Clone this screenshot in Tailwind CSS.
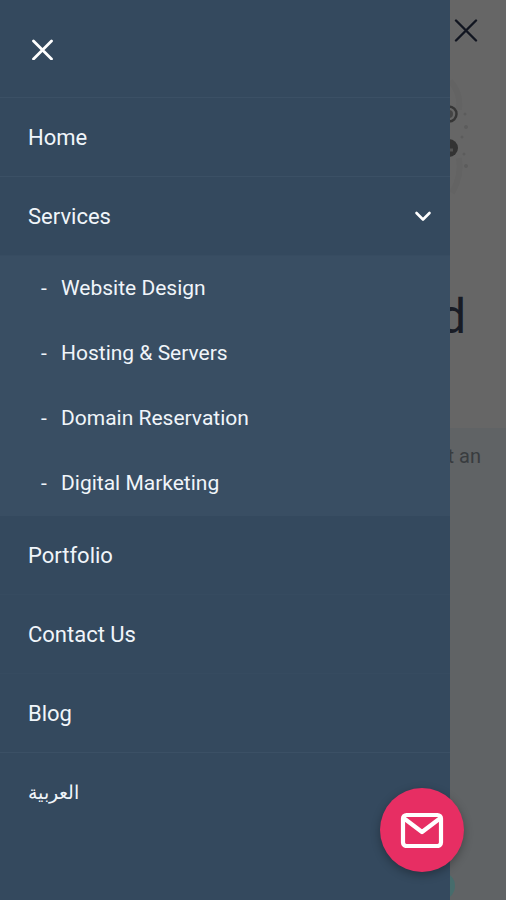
<!DOCTYPE html>
<html lang="en">
<head>
<meta charset="utf-8">
<meta name="viewport" content="width=device-width, initial-scale=1">
<title>Menu</title>
<script src="https://cdn.jsdelivr.net/npm/@tailwindcss/browser@4"></script>
</head>
<body class="relative min-h-screen overflow-x-hidden bg-white font-[Roboto,'Noto_Sans',sans-serif] text-[22px] leading-8">

<!-- Page under the drawer -->
<main class="flex min-h-screen flex-col text-right">
  <header class="flex justify-end px-7 pt-[18px]">
    <button type="button" aria-label="Close page menu" class="text-[#2b3550]">
      <svg class="size-6" viewBox="0 0 24 24" fill="none" stroke="currentColor" stroke-width="2.400" stroke-linecap="round"><path d="M2 2.500 22 22.500M22 2.500 2 22.500"/></svg>
    </button>
  </header>
  <div class="flex justify-end px-7 pt-9">
    <svg class="h-[120px] w-10" viewBox="0 0 40 120" fill="none" aria-hidden="true">
      <path d="M12 3Q23 14 21 32M21 80Q24 98 14 115" stroke="#f7f7f7" stroke-width="6"/>
      <circle cx="11" cy="36" r="7.500" stroke="#888" stroke-width="2.500"/>
      <circle cx="11" cy="36" r="4" fill="#aaa"/>
      <circle cx="11" cy="70" r="9" fill="#808080"/>
      <path d="M8 72h7" stroke="#ccc" stroke-width="3"/>
      <g fill="#e6e6e6"><circle cx="27" cy="36" r="1.500"/><circle cx="28" cy="49" r="2"/><circle cx="24" cy="59" r="1.500"/><circle cx="26" cy="76" r="1.500"/><circle cx="28" cy="88" r="2"/></g>
    </svg>
  </div>
  <h1 class="px-10 pt-[88px] pb-20 text-5xl leading-[62px] font-normal text-[#3f485c]">d</h1>
  <section class="grow bg-[#f0f8fc] px-[25px] pt-3 text-xl leading-8 text-[#8f979f]">
    <p>t an</p>
  </section>
</main>

<div class="absolute inset-0 bg-black/60"></div>
<div class="absolute bottom-0 right-[51px] size-7 rounded-full bg-[#466c6c]"></div>

<!-- Drawer -->
<aside class="absolute inset-y-0 left-0 right-14 bg-[#34495e] text-[#f0f5fa]">
  <div class="flex h-[98px] items-center border-b border-[#3b5065] px-8">
    <button type="button" aria-label="Close menu" class="text-white">
      <svg class="size-[22px]" viewBox="0 0 22 22" fill="none" stroke="currentColor" stroke-width="2.800" stroke-linecap="round"><path d="M1.500 3 19.500 21M19.500 3 1.500 21"/></svg>
    </button>
  </div>
  <nav aria-label="Main">
    <ul>
      <li class="border-b border-[#3b5065]"><a href="#" class="block px-7 pt-6 pb-[22px]">Home</a></li>
      <li>
        <button type="button" aria-expanded="true" class="flex w-full items-center justify-between border-b border-[#374c61] pt-6 pr-[18px] pb-[22px] pl-7">
          <span>Services</span>
          <svg class="size-[18px]" viewBox="0 0 18 18" fill="none" stroke="white" stroke-width="2.600" stroke-linecap="round" stroke-linejoin="round" aria-hidden="true"><path d="m2.500 5 6.500 6.500L15.500 5"/></svg>
        </button>
        <ul class="bg-[#394e63] text-[21px]">
          <li><a href="#" class="flex h-[65px] items-center gap-3 px-[41px] pb-px"><span class="w-2">-</span>Website Design</a></li>
          <li><a href="#" class="flex h-[65px] items-center gap-3 px-[41px] pb-px"><span class="w-2">-</span>Hosting &amp; Servers</a></li>
          <li><a href="#" class="flex h-[65px] items-center gap-3 px-[41px] pb-px"><span class="w-2">-</span>Domain Reservation</a></li>
          <li><a href="#" class="flex h-[65px] items-center gap-3 px-[41px] pb-px"><span class="w-2">-</span>Digital Marketing</a></li>
        </ul>
      </li>
      <li class="border-b border-[#364b60]"><a href="#" class="block px-7 pt-6 pb-[22px]">Portfolio</a></li>
      <li class="border-b border-[#364b60]"><a href="#" class="block px-7 pt-6 pb-[22px]">Contact Us</a></li>
      <li class="border-b border-[#3b5065]"><a href="#" class="block px-7 pt-6 pb-[22px]">Blog</a></li>
      <li><a href="#" lang="ar" class="block px-7 pt-6 pb-[22px] text-[19px]">العربية</a></li>
    </ul>
  </nav>
</aside>

<button type="button" aria-label="Send us a message" class="absolute right-[42px] bottom-7 flex size-[84px] items-center justify-center rounded-full bg-[#e72e63] text-white shadow-[0_3px_10px_rgba(0,0,0,0.3)]">
  <svg class="h-9 w-11" viewBox="0 0 44 36" fill="none" stroke="currentColor" stroke-width="4.200" stroke-linejoin="round"><rect x="3" y="3" width="38" height="31" rx="3.500"/><path d="m3.500 6 18.500 14L40.500 6"/></svg>
</button>
</body>
</html>
